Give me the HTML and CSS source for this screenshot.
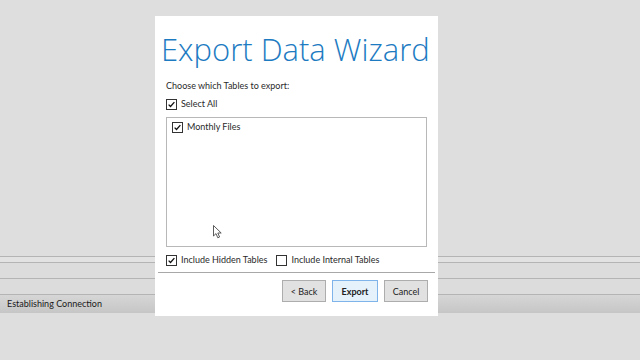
FILE: index.html
```html
<!doctype html>
<html lang="en">
<head>
	<meta charset="UTF-8">
	<title>Export Data Wizard</title>
	<link rel="stylesheet" href="styles.css">
</head>
<body>

	<div id="desktop">
		<div class="topArea"></div>
		<div class="rule"></div>
		<div class="band thin"></div>
		<div class="rule"></div>
		<div class="band"></div>
		<div class="rule"></div>
		<div class="band"></div>
		<div class="rule"></div>
		<div class="statusBar">Establishing Connection</div>
		<div class="bottomArea"></div>
	</div>

	<div id="wizard">
		<h1 class="wizardTitle">Export Data Wizard</h1>
		<p class="prompt">Choose which Tables to export:</p>

		<label class="check selectAll">
			<span class="box on"><svg viewBox="0 0 11 11"><path d="M2 5.6 L4.3 8 L9 2.6" /></svg></span>
			Select All
		</label>

		<div class="tableList">
			<label class="check">
				<span class="box on"><svg viewBox="0 0 11 11"><path d="M2 5.6 L4.3 8 L9 2.6" /></svg></span>
				Monthly Files
			</label>
		</div>

		<div class="options">
			<label class="check">
				<span class="box on"><svg viewBox="0 0 11 11"><path d="M2 5.6 L4.3 8 L9 2.6" /></svg></span>
				Include Hidden Tables
			</label>
			<label class="check">
				<span class="box"></span>
				Include Internal Tables
			</label>
		</div>

		<div class="buttonRow">
			<button class="btn">&lt; Back</button>
			<button class="btn default">Export</button>
			<button class="btn">Cancel</button>
		</div>
	</div>

	<svg class="cursor" viewBox="0 0 10 14" width="10" height="14">
		<path d="M0.5 0.5 L0.5 11 L3 8.6 L4.8 12.8 L6.6 12 L4.8 8 L8.2 8 Z" />
	</svg>

</body>
</html>
```

FILE: styles.css
```css
html, body {
	height: 100%;
	margin: 0px;
	padding: 0px;
}
body {
	background-color: #dddddd;
	font-family: "Lato", "Open Sans", sans-serif;
	font-size: 9px;
	color: #2a2a2a;
	overflow: hidden;
}

/* the main window behind the dialog */
#desktop {
	height: 100%;
	display: flex;
	flex-direction: column;
}
.topArea {
	height: 256px;
	background-color: #dedede;
}
.rule {
	height: 1px;
	background-color: #b4b4b4;
}
.band {
	height: 15px;
	background-color: #dcdcdc;
}
.band.thin {
	height: 5px;
	background-color: #e2e2e2;
}
.statusBar {
	height: 18px;
	line-height: 17px;
	padding-left: 7px;
	background: linear-gradient(#d6d6d6, #c6c6c6);
	color: #1a1a1a;
}
.bottomArea {
	flex: 1;
	background-color: #dedede;
}

/* dialog window, floats over the main window */
#wizard {
	position: absolute;
	left: 155px;
	top: 16px;
	width: 283px;
	height: 300px;
	box-sizing: border-box;
	background-color: #ffffff;
	padding: 0 11px 0 11px;
	display: flex;
	flex-direction: column;
}
.wizardTitle {
	margin: 13px 0 0 -5px;
	font-family: "Open Sans", sans-serif;
	font-size: 31px;
	font-weight: 300;
	line-height: 40px;
	color: #1d7bc2;
	white-space: nowrap;
}
.prompt {
	margin: 10px 0 0 0;
	line-height: 14px;
}

.check {
	display: flex;
	align-items: center;
	gap: 4px;
	line-height: 14px;
	white-space: nowrap;
}
.box {
	width: 9px;
	height: 9px;
	border: 1px solid #333333;
	background-color: #ffffff;
	display: inline-flex;
}
.box svg {
	width: 9px;
	height: 9px;
	fill: none;
	stroke: #111111;
	stroke-width: 1.6;
}
.selectAll {
	margin-top: 4px;
}

.tableList {
	margin-top: 6px;
	height: 130px;
	box-sizing: border-box;
	border: 1px solid #b8b8b8;
	padding: 2px 5px;
}

.options {
	display: flex;
	gap: 9px;
	margin-top: 6px;
	padding-bottom: 5px;
	margin-left: -8px;
	margin-right: -8px;
	padding-left: 8px;
	border-bottom: 1px solid #a8a8a8;
}

.buttonRow {
	display: flex;
	justify-content: flex-end;
	gap: 6px;
	margin-top: 7px;
	margin-right: -1px;
}
.btn {
	width: 44px;
	height: 22px;
	padding: 0;
	font-family: inherit;
	font-size: 9px;
	color: #222222;
	background-color: #e1e1e1;
	border: 1px solid #adadad;
}
.btn.default {
	width: 46px;
	font-weight: bold;
	background-color: #e5f1fb;
	border-color: #7eb4ea;
}

.cursor {
	position: absolute;
	left: 213px;
	top: 225px;
	fill: #ffffff;
	stroke: #333333;
	stroke-width: 0.8;
}
```
